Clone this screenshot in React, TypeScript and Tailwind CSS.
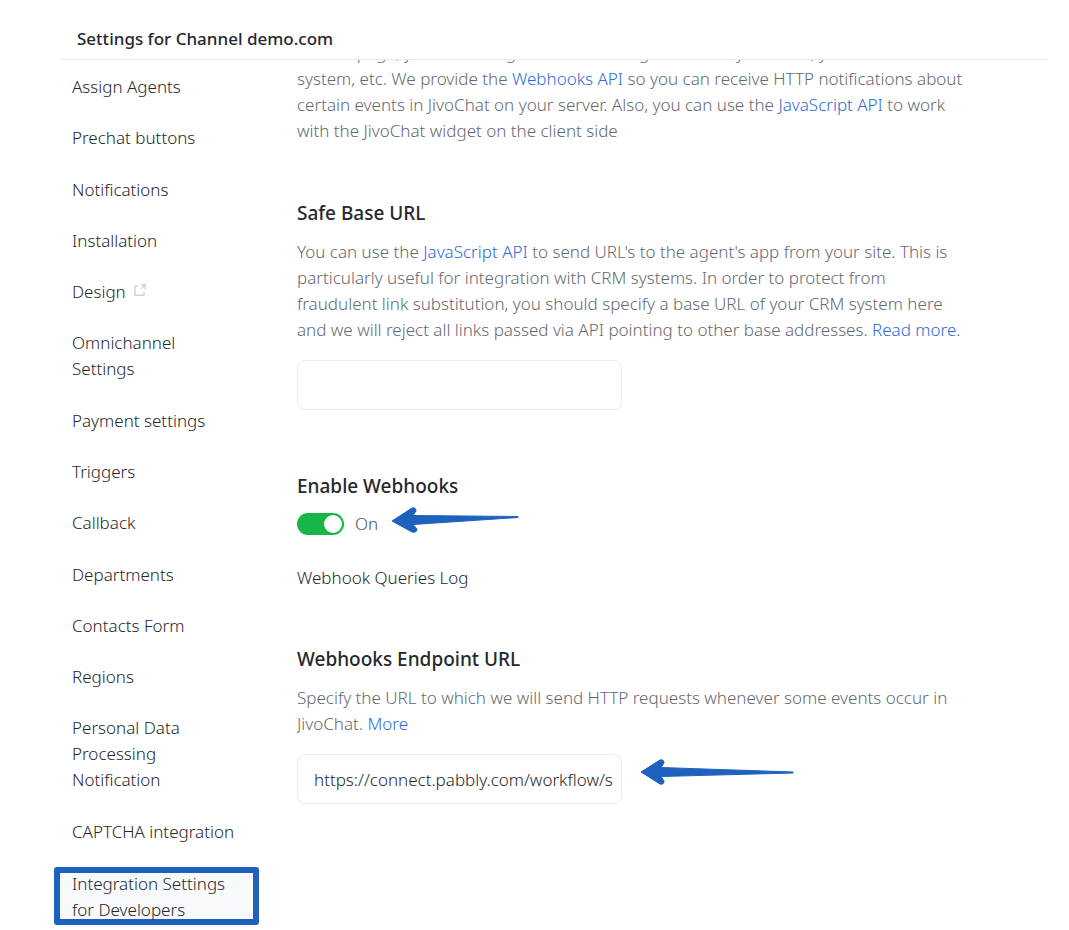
import { useState } from "react";

const NAV_ITEMS = [
  "Assign Agents",
  "Prechat buttons",
  "Notifications",
  "Installation",
  "Design",
  "Omnichannel Settings",
  "Payment settings",
  "Triggers",
  "Callback",
  "Departments",
  "Contacts Form",
  "Regions",
  "Personal Data Processing Notification",
  "CAPTCHA integration",
];

function ExternalIcon() {
  return (
    <svg
      className="mb-2 ml-2 inline-block h-3 w-3 text-[#cfd1d3]"
      viewBox="0 0 12 12"
      fill="none"
      stroke="currentColor"
      strokeWidth="1.4"
      aria-hidden="true"
    >
      <path d="M4 2.2H1v9h9V8M7 .8h4.2V5M11 1 7 5" />
    </svg>
  );
}

function PointerArrow({ className, d, viewBox }: { className: string; d: string; viewBox: string }) {
  return (
    <svg className={className} viewBox={viewBox} aria-hidden="true">
      <path d={d} fill="#1f62be" stroke="#1f62be" strokeWidth="1" strokeLinejoin="round" />
    </svg>
  );
}

function TextLink({ children }: { children: string }) {
  return (
    <a href="#docs" className="text-[#2f6bd8] hover:underline">
      {children}
    </a>
  );
}

export default function App() {
  const [webhooksEnabled, setWebhooksEnabled] = useState(true);
  const [baseUrl, setBaseUrl] = useState("");
  const [endpointUrl, setEndpointUrl] = useState(
    "https://connect.pabbly.com/workflow/sendwebhookdata",
  );

  return (
    <div className="flex h-screen min-h-[900px] flex-col overflow-hidden bg-white font-['Noto_Sans','Open_Sans',sans-serif] text-[17px] leading-[26px] font-light text-[#25282c]">
      <header className="mr-[22px] ml-15 flex h-15 shrink-0 items-center border-b border-[#e9eaeb] px-[17px] pt-[18px]">
        <h1 className="text-[17px] font-medium">Settings for Channel demo.com</h1>
      </header>

      <div className="flex min-h-0 flex-1 pr-20 pl-[54px]">
        <nav className="w-[205px] shrink-0 pt-[14px] pb-[5px]" aria-label="Channel settings">
          <ul className="flex h-full flex-col justify-between">
            {NAV_ITEMS.map((item) => (
              <li key={item} className="pr-5 pl-[18px]">
                <a href="#settings" className="block">
                  {item}
                  {item === "Design" ? <ExternalIcon /> : null}
                </a>
              </li>
            ))}
            <li className="-mt-[3px] rounded-[3px] border-[6px] border-[#1f62be] bg-[#f7f9fb] pr-4 pl-3">
              <a href="#developers" className="-mt-0.5 -mb-1 block" aria-current="page">
                Integration Settings for Developers
              </a>
            </li>
          </ul>
        </nav>

        <main className="ml-[38px] min-w-0 flex-1 overflow-hidden">
          <p className="-mt-5 text-[#656a70]">
            On this page, you can configure website integration with your CRM, your
            <br />
            system, etc. We provide the <TextLink>Webhooks API</TextLink> so you can receive HTTP
            notifications about
            <br />
            certain events in JivoChat on your server. Also, you can use the{" "}
            <TextLink>JavaScript API</TextLink> to work
            <br />
            with the JivoChat widget on the client side
          </p>

          <section className="mt-14">
            <h2 className="text-[19px] font-medium">
              <label htmlFor="base-url">Safe Base URL</label>
            </h2>
            <p className="mt-[13px] text-[#656a70]">
              You can use the <TextLink>JavaScript API</TextLink> to send URL&apos;s to the
              agent&apos;s app from your site. This is
              <br />
              particularly useful for integration with CRM systems. In order to protect from
              <br />
              fraudulent link substitution, you should specify a base URL of your CRM system here
              <br />
              and we will reject all links passed via API pointing to other base addresses.{" "}
              <TextLink>Read more</TextLink>.
            </p>
            <input
              id="base-url"
              className="mt-[17px] block h-[50px] w-[325px] rounded-lg border border-[#e9ebed] px-4 outline-none"
              type="text"
              value={baseUrl}
              onChange={(event) => setBaseUrl(event.target.value)}
            />
          </section>

          <section className="mt-[63px]">
            <h2 className="text-[19px] font-medium">Enable Webhooks</h2>
            <div className="mt-2 flex items-center">
              <label className="relative flex items-center gap-[11px]">
                <input
                  className="peer sr-only"
                  type="checkbox"
                  role="switch"
                  checked={webhooksEnabled}
                  onChange={(event) => setWebhooksEnabled(event.target.checked)}
                />
                <span className="flex h-[22px] w-[47px] items-center rounded-full bg-[#c7ccd1] p-0.5 peer-checked:justify-end peer-checked:bg-[#18b648]">
                  <span className="h-[18px] w-[18px] rounded-full bg-white" />
                </span>
                <span className="text-[#4c5157]">{webhooksEnabled ? "On" : "Off"}</span>
              </label>
              <PointerArrow
                className="mb-[7px] ml-[13px] h-[26px] w-[128px]"
                viewBox="0 0 128 26"
                d="M1 14 L21 1 Q25 0 25 4 L22 8.5 L127 9.5 L127 10.5 L22 17.5 L26 22 Q26 26 21 25 Z"
              />
            </div>
            <p className="mt-[25px]">Webhook Queries Log</p>
          </section>

          <section className="mt-[55px]">
            <h2 className="text-[19px] font-medium">
              <label htmlFor="endpoint-url">Webhooks Endpoint URL</label>
            </h2>
            <p className="mt-[13px] text-[#656a70]">
              Specify the URL to which we will send HTTP requests whenever some events occur in
              <br />
              JivoChat. <TextLink>More</TextLink>
            </p>
            <div className="mt-[17px] flex items-center">
              <div className="h-[50px] w-[325px] rounded-lg border border-[#e9ebed] pr-2 pl-4">
                <input
                  id="endpoint-url"
                  className="h-full w-full outline-none"
                  type="text"
                  value={endpointUrl}
                  onChange={(event) => setEndpointUrl(event.target.value)}
                />
              </div>
              <PointerArrow
                className="mb-[14px] ml-[18px] h-[26px] w-[154px]"
                viewBox="0 0 154 26"
                d="M1 13 L20 1 Q24 0 24 4 L21 8.5 L153 13 L153 14 L21 17.5 L24 22 Q24 26 20 25 Z"
              />
            </div>
          </section>
        </main>
      </div>
    </div>
  );
}
